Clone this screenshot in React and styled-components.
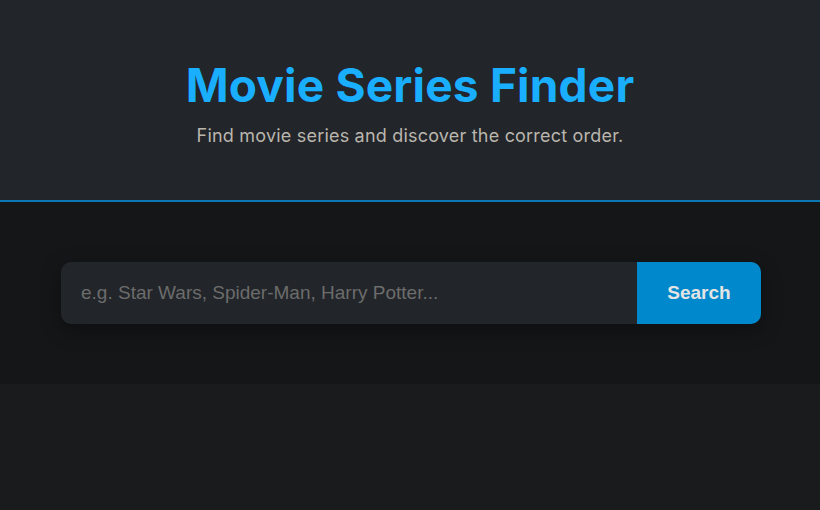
import React from "react";
import styled, { createGlobalStyle } from "styled-components";

const GlobalStyle = createGlobalStyle`
  body {
    margin: 0;
    background: #1a1b1d;
    font-family: "Liberation Sans", Arial, sans-serif;
  }
`;

const Header = styled.header`
  box-sizing: border-box;
  height: 202px;
  padding-top: 8px;
  background: #222529;
  border-bottom: 2px solid #0a78b4;
  display: flex;
  flex-direction: column;
  align-items: center;
  justify-content: center;
  gap: 12px;
`;

const Title = styled.h1`
  margin: 0;
  font-family: Inter, "Noto Sans", sans-serif;
  font-weight: 700;
  font-size: 46px;
  line-height: 52px;
  color: #1aaeff;
  letter-spacing: 0.2px;
`;

const Subtitle = styled.p`
  margin: 0;
  font-family: Inter, "Noto Sans", sans-serif;
  font-size: 18px;
  line-height: 26px;
  color: #bab6ae;
  letter-spacing: 0.2px;
`;

const SearchSection = styled.section`
  background: #151618;
  padding: 60px 59px 60px 61px;
`;

const SearchBar = styled.form`
  display: flex;
  height: 62px;
  border-radius: 10px;
  overflow: hidden;
  background: #222529;
  box-shadow: 0 6px 20px rgba(0, 0, 0, 0.35);
`;

const Input = styled.input`
  flex: 1;
  border: none;
  outline: none;
  background: transparent;
  padding: 0 20px;
  font-family: "Liberation Sans", Arial, sans-serif;
  font-size: 19px;
  color: #ddd;

  &::placeholder {
    color: #6c6c6c;
  }
`;

const Button = styled.button`
  width: 124px;
  border: none;
  background: #0088cc;
  color: #e4e4e4;
  font-family: "Liberation Sans", Arial, sans-serif;
  font-weight: 700;
  font-size: 19px;
  cursor: pointer;
`;

export default function App() {
  return (
    <>
      <GlobalStyle />
      <Header>
        <Title>Movie Series Finder</Title>
        <Subtitle>Find movie series and discover the correct order.</Subtitle>
      </Header>
      <SearchSection>
        <SearchBar onSubmit={(e) => e.preventDefault()}>
          <Input placeholder="e.g. Star Wars, Spider-Man, Harry Potter..." />
          <Button type="submit">Search</Button>
        </SearchBar>
      </SearchSection>
    </>
  );
}
